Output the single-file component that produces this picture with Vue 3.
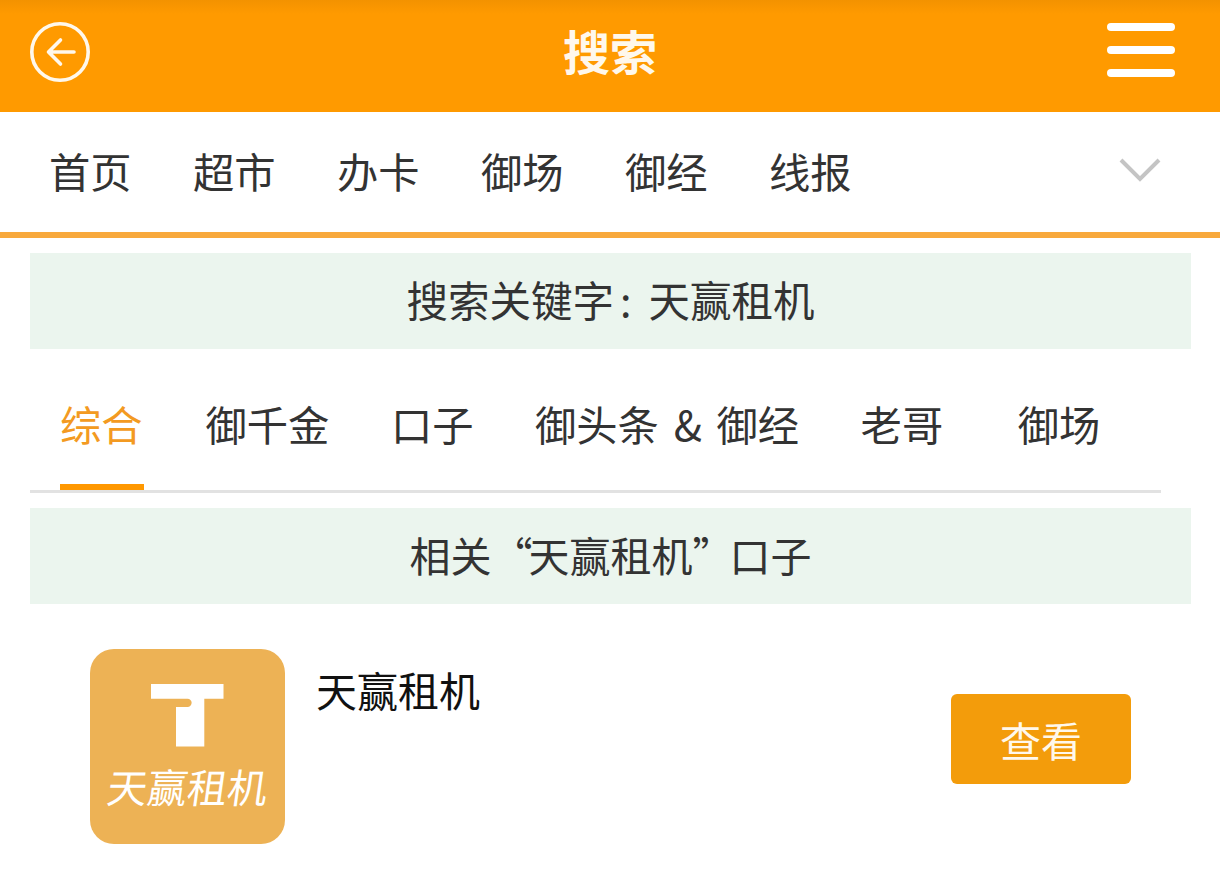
<script setup>
const navItems = ['首页', '超市', '办卡', '御场', '御经', '线报']
const tabs = ['综合', '御千金', '口子', '御头条 & 御经', '老哥', '御场']
</script>

<template>
    <div class="page">
        <header class="top-bar">
            <svg class="back-icon" viewBox="0 0 60 60" width="60" height="60">
                <circle cx="30" cy="30" r="28.2" fill="none" stroke="#fff8ec" stroke-width="3.6"/>
                <path d="M44 30H18.5M30.5 18L18.5 30L30.5 42" fill="none" stroke="#fff8ec" stroke-width="3.6" stroke-linecap="round" stroke-linejoin="round"/>
            </svg>
            <h1 class="title">搜索</h1>
            <div class="menu-icon">
                <span/><span/><span/>
            </div>
        </header>

        <nav class="main-nav">
            <a v-for="item in navItems" :key="item" class="nav-item">{{ item }}</a>
            <svg class="nav-arrow" viewBox="0 0 42 25" width="42" height="25">
                <path d="M2 2L21 21L40 2" fill="none" stroke="#c4c4c4" stroke-width="4"/>
            </svg>
        </nav>

        <div class="banner first">搜索关键字<span class="colon">:</span>天赢租机</div>

        <div class="tabs">
            <a v-for="(tab, i) in tabs" :key="tab" class="tab" :class="{ active: i === 0 }">{{ tab }}</a>
        </div>

        <div class="banner">相关<span class="quote">“</span>天赢租机<span class="quote">”</span>口子</div>

        <div class="result-row">
            <div class="logo">
                <svg class="logo-t" viewBox="0 0 73 63" width="73" height="63">
                    <path d="M0 0H72.5V14.7H53.3V62.5H25V23H36.5A4.15 4.15 0 0 0 36.5 14.7H0Z" fill="#fff"/>
                </svg>
                <div class="logo-text">天赢租机</div>
            </div>
            <div class="result-name">天赢租机</div>
            <button class="view-btn">查看</button>
        </div>
    </div>
</template>

<style scoped>
.page {
    width: 1220px;
    height: 870px;
    overflow: hidden;
    background: #fff;
    font-family: "Noto Sans CJK SC", "Liberation Sans", sans-serif;
    color: #333;
}

.top-bar {
    height: 112px;
    box-sizing: border-box;
    padding: 0 45px 8px 30px;
    display: grid;
    grid-template-columns: 1fr auto 1fr;
    align-items: center;
    background: linear-gradient(to bottom, #f39200 0, #ff9a00 14px);
}

.title {
    margin: -6px 0 0 15px;
    font-size: 47px;
    font-weight: 700;
    line-height: 1;
    color: #fff8ec;
}

.menu-icon {
    justify-self: end;
    width: 68px;
    display: flex;
    flex-direction: column;
    gap: 15.5px;
    margin-top: -4px;
}

.menu-icon span {
    height: 7.5px;
    border-radius: 4px;
    background: #fff;
}

.main-nav {
    height: 126px;
    box-sizing: border-box;
    padding: 0 59px 0 49px;
    display: flex;
    align-items: center;
    gap: 61.4px;
    border-bottom: 6px solid #f8a93c;
}

.nav-item {
    font-size: 41.3px;
    line-height: 1;
    margin-top: -2px;
}

.nav-arrow {
    margin-left: auto;
    margin-top: -4px;
}

.banner {
    margin: 0 29px 0 30px;
    height: 96px;
    line-height: 92px;
    text-align: center;
    font-size: 41px;
    background: #ebf5ee;
}

.banner.first {
    margin-top: 15px;
    font-size: 41.5px;
}

.colon {
    padding: 0 17px 0 6px;
}

.quote {
    letter-spacing: -4px;
}

.tabs {
    margin: 0 59px 15px 30px;
    height: 144px;
    box-sizing: border-box;
    padding-left: 30px;
    display: flex;
    gap: 61.5px;
    border-bottom: 3px solid #e2e2e2;
}

.tab {
    height: 141px;
    line-height: 148px;
    font-size: 41.3px;
    white-space: nowrap;
    word-spacing: 5.5px;
}

.tab:last-child {
    margin-left: 13px;
}

.tab.active {
    width: 84px;
    color: #f39a21;
    border-bottom: 6px solid #ff9800;
    box-sizing: border-box;
}

.result-row {
    padding: 45px 89px 0 90px;
    display: flex;
    align-items: flex-start;
}

.logo {
    width: 195px;
    height: 195px;
    border-radius: 24px;
    background: #edb255;
    display: flex;
    flex-direction: column;
    align-items: center;
}

.logo-t {
    margin-top: 35px;
}

.logo-text {
    margin-top: 15px;
    font-size: 40px;
    line-height: 1.2;
    font-weight: 400;
    color: #fff;
    white-space: nowrap;
    transform: skewX(-8deg);
}

.result-name {
    margin-left: 31px;
    font-size: 41px;
    line-height: 1.2;
    margin-top: 16px;
    color: #111;
}

.view-btn {
    margin: 45px 0 0 auto;
    width: 180px;
    height: 90px;
    border: none;
    border-radius: 6px;
    background: #f39c0b;
    color: #fff8ec;
    font-family: inherit;
    font-size: 41px;
    line-height: 1;
    padding: 0;
}
</style>
